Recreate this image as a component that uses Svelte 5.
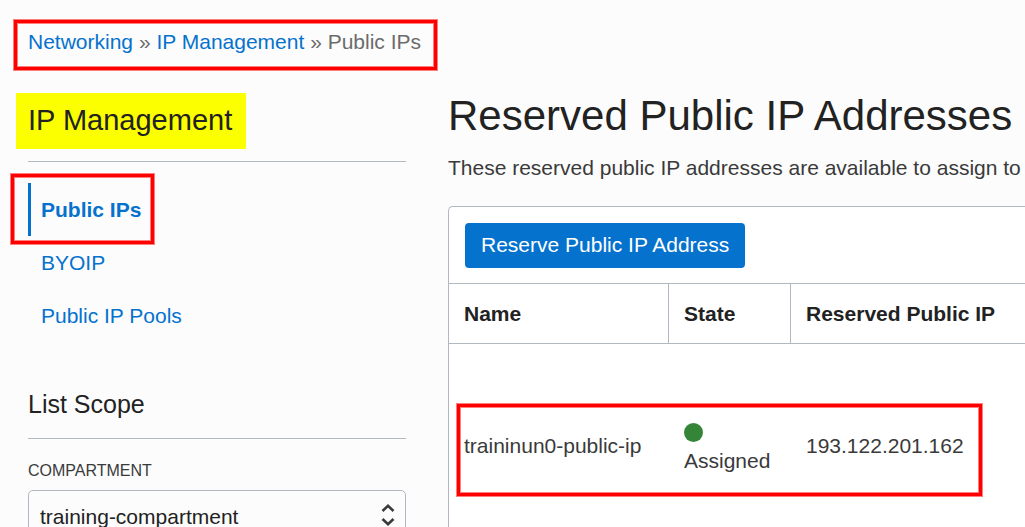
<script>
  const links = [
    { label: 'Public IPs', active: true },
    { label: 'BYOIP', active: false },
    { label: 'Public IP Pools', active: false },
  ];
  const rows = [{ name: 'traininun0-public-ip', state: 'Assigned', ip: '193.122.201.162' }];
</script>

<div class="page">
  <nav class="crumbs" aria-label="Breadcrumb">
    <a href="#networking">Networking</a>
    <span>»</span>
    <a href="#ip-management">IP Management</a>
    <span>»</span>
    <span>Public IPs</span>
    <div class="mark mark-crumbs"></div>
  </nav>

  <div class="columns">
    <aside>
      <div class="side-head"><h2>IP Management</h2></div>
      <ul class="links">
        {#each links as link}
          <li class:active={link.active}>
            <a href="#{link.label}">{link.label}</a>
            {#if link.active}<div class="mark mark-link"></div>{/if}
          </li>
        {/each}
      </ul>
      <h3>List Scope</h3>
      <label for="compartment">COMPARTMENT</label>
      <div class="select">
        <select id="compartment">
          <option>training-compartment</option>
        </select>
        <svg width="14" height="24" viewBox="0 0 14 24" fill="none" stroke="#3a3a3a" stroke-width="2.6" aria-hidden="true">
          <path d="M1.5 8 L7 2.8 L12.5 8" />
          <path d="M1.5 16 L7 21.2 L12.5 16" />
        </svg>
      </div>
    </aside>

    <main>
      <h1>Reserved Public IP Addresses</h1>
      <p>These reserved public IP addresses are available to assign to</p>
      <section class="panel">
        <div class="toolbar"><button type="button">Reserve Public IP Address</button></div>
        <table>
          <colgroup><col class="c-name" /><col class="c-state" /><col /></colgroup>
          <thead>
            <tr><th scope="col">Name</th><th scope="col">State</th><th scope="col">Reserved Public IP</th></tr>
          </thead>
          <tbody>
            {#each rows as row}
              <tr>
                <td>{row.name}</td>
                <td><span class="dot"></span><span class="state">{row.state}</span></td>
                <td>{row.ip}</td>
              </tr>
            {/each}
          </tbody>
        </table>
        <div class="mark mark-row"></div>
      </section>
    </main>
  </div>
</div>

<style>
  :global(body) {
    background: #fcfcfc;
  }
  .page {
    box-sizing: border-box;
    height: 100vh;
    overflow: hidden;
    padding: 28px 0 0 28px;
    font: 21px/28px "Liberation Sans", Arial, sans-serif;
    color: #3a3a3a;
  }
  a {
    color: #0572ce;
    text-decoration: none;
  }
  h1, h2, h3, p, ul {
    margin: 0;
    padding: 0;
    font-weight: normal;
  }
  h1, h2, h3 {
    color: #222;
  }
  .mark {
    position: absolute;
    box-sizing: border-box;
    border: 3px solid #f00;
    box-shadow: 0 0 0 1px rgba(255, 0, 0, 0.5), inset 0 0 0 1px rgba(255, 0, 0, 0.5);
    pointer-events: none;
  }
  .crumbs {
    position: relative;
    width: max-content;
    color: #6b6b6b;
  }
  .mark-crumbs {
    inset: -8px -16px -14px -14px;
  }
  .columns {
    display: grid;
    grid-template-columns: 378px minmax(0, 1fr);
    gap: 42px;
    padding-top: 37px;
  }
  .side-head {
    padding-bottom: 12px;
    border-bottom: 1px solid #b1b8c2;
  }
  h2 {
    width: max-content;
    margin-left: -12px;
    padding: 0 14px 2px 12px;
    font-size: 29px;
    line-height: 54px;
    background: #fcff00;
  }
  .links {
    list-style: none;
    padding: 21px 0 47px;
  }
  .links li {
    position: relative;
    width: max-content;
    padding-left: 10px;
    border-left: 3px solid transparent;
    line-height: 53px;
  }
  .links .active {
    border-color: #0572ce;
    font-weight: bold;
  }
  .mark-link {
    inset: -9px -13px -8px -20px;
  }
  h3 {
    padding-bottom: 19px;
    border-bottom: 1px solid #b1b8c2;
    font-size: 25px;
    line-height: 30px;
  }
  label {
    display: block;
    padding: 22px 0 9px;
    font-size: 16px;
    line-height: 20px;
  }
  .select {
    position: relative;
  }
  select {
    appearance: none;
    box-sizing: border-box;
    width: 100%;
    height: 54px;
    padding: 0 44px 0 11px;
    border: 1px solid #b1b8c2;
    border-radius: 5px;
    background: #fcfcfc;
    color: #222;
    font: inherit;
  }
  .select svg {
    position: absolute;
    right: 11px;
    top: 13px;
  }
  h1 {
    font-size: 42px;
    line-height: 46px;
    white-space: nowrap;
  }
  p {
    padding: 15px 0 24px;
    white-space: nowrap;
  }
  .panel {
    position: relative;
    border: 1px solid #b1b8c2;
    border-right: 0;
    border-radius: 5px 0 0 5px;
    background: #fff;
  }
  .toolbar {
    padding: 16px 16px 15px;
  }
  button {
    display: block;
    height: 45px;
    padding: 0 16px 2px;
    border: 0;
    border-radius: 4px;
    background: #0572ce;
    color: #fff;
    font: inherit;
  }
  table {
    width: 100%;
    table-layout: fixed;
    border-collapse: separate;
    border-spacing: 0;
  }
  .c-name {
    width: 220px;
  }
  .c-state {
    width: 122px;
  }
  th, td {
    box-sizing: border-box;
    padding: 0 15px;
    text-align: left;
    white-space: nowrap;
  }
  th {
    height: 61px;
    border: solid #b1b8c2;
    border-width: 1px 1px 1px 0;
    color: #222;
  }
  th:last-child {
    border-right: 0;
  }
  td {
    height: 203px;
  }
  .dot {
    display: block;
    width: 19px;
    height: 19px;
    margin: 6px 0 5px;
    border-radius: 50%;
    background: #358539;
  }
  .state {
    display: block;
  }
  .mark-row {
    top: 197px;
    left: 8px;
    width: 525px;
    height: 92px;
  }
</style>
